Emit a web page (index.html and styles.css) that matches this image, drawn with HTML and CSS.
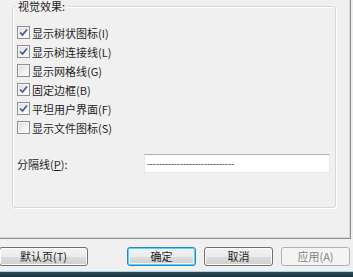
FILE: index.html
```html
<!DOCTYPE html>
<html lang="zh-CN">
<head>
<meta charset="utf-8">
<title>视觉效果</title>
<link rel="stylesheet" href="styles.css">
</head>
<body>
<div class="window">
  <div class="panel">
    <div class="group">
      <span class="group-title">视觉效果:</span>
      <ul class="checks">
        <li class="check-row"><span class="box checked"><svg viewBox="0 0 11 11" width="11" height="11"><path d="M2 5.5 L4.5 8 L9 2.5" /></svg></span><span class="label">显示树状图标(I)</span></li>
        <li class="check-row"><span class="box checked"><svg viewBox="0 0 11 11" width="11" height="11"><path d="M2 5.5 L4.5 8 L9 2.5" /></svg></span><span class="label">显示树连接线(L)</span></li>
        <li class="check-row"><span class="box"></span><span class="label">显示网格线(G)</span></li>
        <li class="check-row"><span class="box checked"><svg viewBox="0 0 11 11" width="11" height="11"><path d="M2 5.5 L4.5 8 L9 2.5" /></svg></span><span class="label">固定边框(B)</span></li>
        <li class="check-row"><span class="box checked"><svg viewBox="0 0 11 11" width="11" height="11"><path d="M2 5.5 L4.5 8 L9 2.5" /></svg></span><span class="label">平坦用户界面(F)</span></li>
        <li class="check-row"><span class="box"></span><span class="label">显示文件图标(S)</span></li>
      </ul>
      <div class="sep-row">
        <span class="label">分隔线(<u>P</u>):</span>
        <div class="textbox"><span class="dashes">-----------------------------</span></div>
      </div>
    </div>
  </div>
  <div class="buttons">
    <button class="btn btn-first">默认页(T)</button>
    <button class="btn btn-default btn-ok">确定</button>
    <button class="btn">取消</button>
    <button class="btn btn-disabled">应用(A)</button>
  </div>
  <div class="taskbar"></div>
</div>
</body>
</html>
```
FILE: styles.css
```css
* { box-sizing: border-box; }
html, body {
  margin: 0;
  padding: 0;
  background: #f0f0f0;
}
body {
  width: 353px;
  height: 277px;
  overflow: hidden;
  font-family: "Noto Sans CJK SC", "Noto Sans", sans-serif;
  font-size: 11px;
  color: #1e1e1e;
}
.window {
  width: 353px;
  height: 277px;
  display: flex;
  flex-direction: column;
}
.panel {
  width: 351px;
  height: 239px;
  border-right: 1px solid #8b8e95;
  border-bottom: 1px solid #8b8e95;
  box-shadow: inset -1px -1px 0 #d9d9d9;
  padding-top: 6px;
  padding-left: 12px;
}
.group {
  position: relative;
  width: 324px;
  height: 202px;
  border: 1px solid #d5d9dc;
  border-radius: 3px;
  box-shadow: inset 1px 1px 0 #ffffff, 1px 1px 0 #ffffff;
  padding: 16px 5px 0 4px;
}
.group-title {
  position: absolute;
  top: -8px;
  left: 3px;
  padding: 0 2px;
  background: #f0f0f0;
  line-height: 14px;
}
.checks {
  list-style: none;
  margin: 0;
  padding: 0;
}
.check-row {
  height: 19px;
  display: flex;
  align-items: center;
  gap: 2px;
}
.box {
  width: 13px;
  height: 13px;
  border: 1px solid #8f8f8f;
  background: linear-gradient(135deg, #dcdcdc 0%, #f2f2f2 60%, #ffffff 100%);
  box-shadow: inset 0 0 0 1px #f4f4f4;
  display: flex;
  align-items: center;
  justify-content: center;
}
.box svg path {
  fill: none;
  stroke: #3f5a95;
  stroke-width: 1.7;
}
.label {
  line-height: 14px;
  white-space: nowrap;
}
.sep-row {
  margin-top: 17px;
  height: 19px;
  display: grid;
  grid-template-columns: 127px 186px;
  align-items: center;
}
.textbox {
  height: 19px;
  background: #ffffff;
  border: 1px solid #e3e9ef;
  border-top-color: #abadb3;
  display: flex;
  align-items: center;
  padding-left: 2px;
}
.dashes {
  font-family: "Liberation Sans", sans-serif;
  font-size: 9px;
  color: #333;
  line-height: 10px;
}
.buttons {
  margin-top: 8px;
  height: 19px;
  display: flex;
}
.btn {
  width: 69px;
  height: 19px;
  margin: 0 0 0 8px;
  padding: 0;
  font: inherit;
  color: #1e1e1e;
  border: 1px solid #707070;
  border-radius: 3px;
  background: linear-gradient(#f2f2f2 0%, #ebebeb 50%, #dddddd 51%, #cfcfcf 100%);
  box-shadow: inset 0 0 0 1px #fcfcfc;
  line-height: 15px;
}
.btn-first {
  width: 89px;
  margin-left: -1px;
}
.btn-ok {
  margin-left: 39px;
}
.btn-default {
  border-color: #3c7fb1;
  box-shadow: inset 0 0 0 1px #48d8fb, inset 0 0 0 2px #e8f6fd;
  background: linear-gradient(#eaf6fd 0%, #d9f0fc 50%, #bee6fd 51%, #a7d9f5 100%);
  background: linear-gradient(#f2f2f2 0%, #ebebeb 50%, #dddddd 51%, #cfcfcf 100%);
}
.btn-disabled {
  border-color: #adb2b5;
  background: #f4f4f4;
  box-shadow: none;
  color: #838383;
}
.taskbar {
  margin-top: 5px;
  height: 6px;
  border-top: 1px solid #a9d6e6;
  background: linear-gradient(#2b4d5c, #1a3340);
}
```
